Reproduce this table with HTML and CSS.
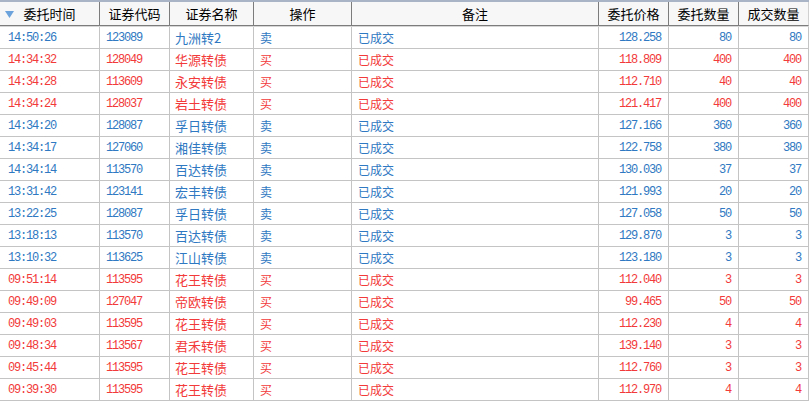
FILE: index.html
```html
<!DOCTYPE html>
<html lang="zh">
<head>
<meta charset="utf-8">
<link rel="stylesheet" href="styles.css">
</head>
<body>
<div class="grid">
  <div class="band"></div>
  <div class="row head">
    <div class="cell"><svg class="sort" width="9" height="7" viewBox="0 0 9 7"><polygon points="0,0 9,0 4.5,7" fill="#6da3dc"/></svg><span>委托时间</span></div>
    <div class="cell">证券代码</div>
    <div class="cell">证券名称</div>
    <div class="cell">操作</div>
    <div class="cell">备注</div>
    <div class="cell">委托价格</div>
    <div class="cell">委托数量</div>
    <div class="cell">成交数量</div>
  </div>
  <div class="body">
    <div class="row sell"><div class="cell num t">14:50:26</div><div class="cell num">123089</div><div class="cell name">九洲转2</div><div class="cell">卖</div><div class="cell">已成交</div><div class="cell num r">128.258</div><div class="cell num r">80</div><div class="cell num r">80</div></div>
    <div class="row buy"><div class="cell num t">14:34:32</div><div class="cell num">128049</div><div class="cell name">华源转债</div><div class="cell">买</div><div class="cell">已成交</div><div class="cell num r">118.809</div><div class="cell num r">400</div><div class="cell num r">400</div></div>
    <div class="row buy"><div class="cell num t">14:34:28</div><div class="cell num">113609</div><div class="cell name">永安转债</div><div class="cell">买</div><div class="cell">已成交</div><div class="cell num r">112.710</div><div class="cell num r">40</div><div class="cell num r">40</div></div>
    <div class="row buy"><div class="cell num t">14:34:24</div><div class="cell num">128037</div><div class="cell name">岩土转债</div><div class="cell">买</div><div class="cell">已成交</div><div class="cell num r">121.417</div><div class="cell num r">400</div><div class="cell num r">400</div></div>
    <div class="row sell"><div class="cell num t">14:34:20</div><div class="cell num">128087</div><div class="cell name">孚日转债</div><div class="cell">卖</div><div class="cell">已成交</div><div class="cell num r">127.166</div><div class="cell num r">360</div><div class="cell num r">360</div></div>
    <div class="row sell"><div class="cell num t">14:34:17</div><div class="cell num">127060</div><div class="cell name">湘佳转债</div><div class="cell">卖</div><div class="cell">已成交</div><div class="cell num r">122.758</div><div class="cell num r">380</div><div class="cell num r">380</div></div>
    <div class="row sell"><div class="cell num t">14:34:14</div><div class="cell num">113570</div><div class="cell name">百达转债</div><div class="cell">卖</div><div class="cell">已成交</div><div class="cell num r">130.030</div><div class="cell num r">37</div><div class="cell num r">37</div></div>
    <div class="row sell"><div class="cell num t">13:31:42</div><div class="cell num">123141</div><div class="cell name">宏丰转债</div><div class="cell">卖</div><div class="cell">已成交</div><div class="cell num r">121.993</div><div class="cell num r">20</div><div class="cell num r">20</div></div>
    <div class="row sell"><div class="cell num t">13:22:25</div><div class="cell num">128087</div><div class="cell name">孚日转债</div><div class="cell">卖</div><div class="cell">已成交</div><div class="cell num r">127.058</div><div class="cell num r">50</div><div class="cell num r">50</div></div>
    <div class="row sell"><div class="cell num t">13:18:13</div><div class="cell num">113570</div><div class="cell name">百达转债</div><div class="cell">卖</div><div class="cell">已成交</div><div class="cell num r">129.870</div><div class="cell num r">3</div><div class="cell num r">3</div></div>
    <div class="row sell"><div class="cell num t">13:10:32</div><div class="cell num">113625</div><div class="cell name">江山转债</div><div class="cell">卖</div><div class="cell">已成交</div><div class="cell num r">123.180</div><div class="cell num r">3</div><div class="cell num r">3</div></div>
    <div class="row buy"><div class="cell num t">09:51:14</div><div class="cell num">113595</div><div class="cell name">花王转债</div><div class="cell">买</div><div class="cell">已成交</div><div class="cell num r">112.040</div><div class="cell num r">3</div><div class="cell num r">3</div></div>
    <div class="row buy"><div class="cell num t">09:49:09</div><div class="cell num">127047</div><div class="cell name">帝欧转债</div><div class="cell">买</div><div class="cell">已成交</div><div class="cell num r">99.465</div><div class="cell num r">50</div><div class="cell num r">50</div></div>
    <div class="row buy"><div class="cell num t">09:49:03</div><div class="cell num">113595</div><div class="cell name">花王转债</div><div class="cell">买</div><div class="cell">已成交</div><div class="cell num r">112.230</div><div class="cell num r">4</div><div class="cell num r">4</div></div>
    <div class="row buy"><div class="cell num t">09:48:34</div><div class="cell num">113567</div><div class="cell name">君禾转债</div><div class="cell">买</div><div class="cell">已成交</div><div class="cell num r">139.140</div><div class="cell num r">3</div><div class="cell num r">3</div></div>
    <div class="row buy"><div class="cell num t">09:45:44</div><div class="cell num">113595</div><div class="cell name">花王转债</div><div class="cell">买</div><div class="cell">已成交</div><div class="cell num r">112.760</div><div class="cell num r">3</div><div class="cell num r">3</div></div>
    <div class="row buy"><div class="cell num t">09:39:30</div><div class="cell num">113595</div><div class="cell name">花王转债</div><div class="cell">买</div><div class="cell">已成交</div><div class="cell num r">112.970</div><div class="cell num r">4</div><div class="cell num r">4</div></div>
  </div>
</div>
</body>
</html>
```
FILE: styles.css
```css
html, body {
  margin: 0;
  padding: 0;
  background: #ffffff;
  overflow: hidden;
}
body {
  font-family: "Noto Sans CJK SC", "DejaVu Sans", sans-serif;
  font-size: 12px;
}
.grid {
  width: 809px;
}
.band {
  height: 2px;
  background: #a9b5c7;
}
.row {
  display: grid;
  grid-template-columns: 100px 70px 84px 98px 247px 70px 70px 70px;
}
.cell {
  box-sizing: border-box;
  border-right: 1px solid #c4c4c4;
  border-bottom: 1px solid #c4c4c4;
  height: 22px;
  line-height: 22px;
  padding: 0 6px;
  white-space: nowrap;
  overflow: hidden;
}
.head .cell {
  height: 24px;
  line-height: 23px;
  background: #f7f7f7;
  border-right-color: #7c7c7c;
  border-bottom-color: #7c7c7c;
  text-align: center;
  color: #000;
  font-size: 13px;
  position: relative;
}
.head .cell:last-child {
  border-right-color: #d0d0d0;
}
.sort {
  position: absolute;
  left: 5px;
  top: 9px;
}
.body {
  border-top: 1px solid #d6d6d6;
}
.num {
  font-family: "Liberation Mono", "DejaVu Sans Mono", monospace;
  font-size: 12px;
  letter-spacing: -1.2px;
}
.t {
  padding-left: 8px;
}
.name {
  font-size: 13px;
  padding-left: 5px;
}
.r {
  text-align: right;
  padding-right: 7px;
}
.sell .cell {
  color: #2f78c2;
}
.buy .cell {
  color: #f23a3a;
}
```
